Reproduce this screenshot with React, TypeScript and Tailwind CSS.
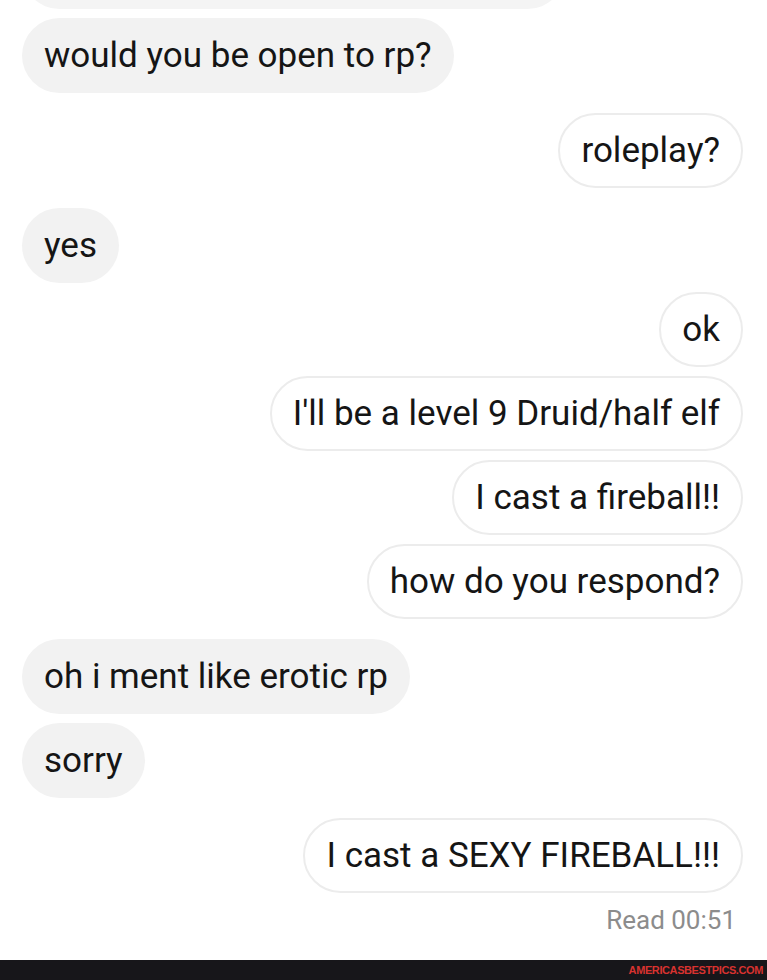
type Msg = { text: string; mine: boolean; gap: 'same' | 'new' };

const messages: Msg[] = [
  { text: 'would you be open to rp?', mine: false, gap: 'same' },
  { text: 'roleplay?', mine: true, gap: 'new' },
  { text: 'yes', mine: false, gap: 'new' },
  { text: 'ok', mine: true, gap: 'same' },
  { text: "I'll be a level 9 Druid/half elf", mine: true, gap: 'same' },
  { text: 'I cast a fireball!!', mine: true, gap: 'same' },
  { text: 'how do you respond?', mine: true, gap: 'same' },
  { text: 'oh i ment like erotic rp', mine: false, gap: 'new' },
  { text: 'sorry', mine: false, gap: 'same' },
  { text: 'I cast a SEXY FIREBALL!!!', mine: true, gap: 'new' },
];

function Bubble({ msg }: { msg: Msg }) {
  return (
    <div
      className={
        (msg.mine ? 'justify-end ' : 'justify-start ') +
        (msg.gap === 'new' ? 'mt-[20px] ' : 'mt-[9px] ') +
        'flex'
      }
    >
      <div
        className={
          msg.mine
            ? 'h-[75px] min-w-[81px] flex items-center justify-center rounded-full border-2 border-[#ececec] bg-white px-[21px]'
            : 'h-[75px] min-w-[81px] flex items-center justify-center rounded-full bg-[#f2f2f2] px-[22px]'
        }
      >
        <span className="text-[35px] leading-none text-[#151515] whitespace-nowrap">{msg.text}</span>
      </div>
    </div>
  );
}

export default function App() {
  return (
    <div
      className="w-[767px] h-[980px] overflow-hidden bg-white flex flex-col"
      style={{ fontFamily: 'Roboto, "Liberation Sans", sans-serif' }}
    >
      <div className="flex-1 flex flex-col pl-[22px] pr-[24px] overflow-hidden">
        {/* previous message, scrolled off the top */}
        <div className="flex justify-start mt-[-66px]">
          <div className="h-[75px] w-[543px] rounded-full bg-[#f4f4f4]" />
        </div>
        {messages.map((m, i) => (
          <Bubble key={i} msg={m} />
        ))}
        <div className="flex justify-end pr-[7px] mt-[10px]">
          <span className="text-[26px] leading-[34px] text-[#8c8c8c]">Read 00:51</span>
        </div>
      </div>
      <div className="h-[20px] shrink-0 bg-[#17161a] flex items-center justify-end pr-[4px]">
        <span
          className="text-[11px] font-bold leading-none tracking-[-0.4px] text-[#d8322f]"
          style={{ fontFamily: '"Liberation Sans", Arial, sans-serif' }}
        >
          AMERICASBESTPICS.COM
        </span>
      </div>
    </div>
  );
}
